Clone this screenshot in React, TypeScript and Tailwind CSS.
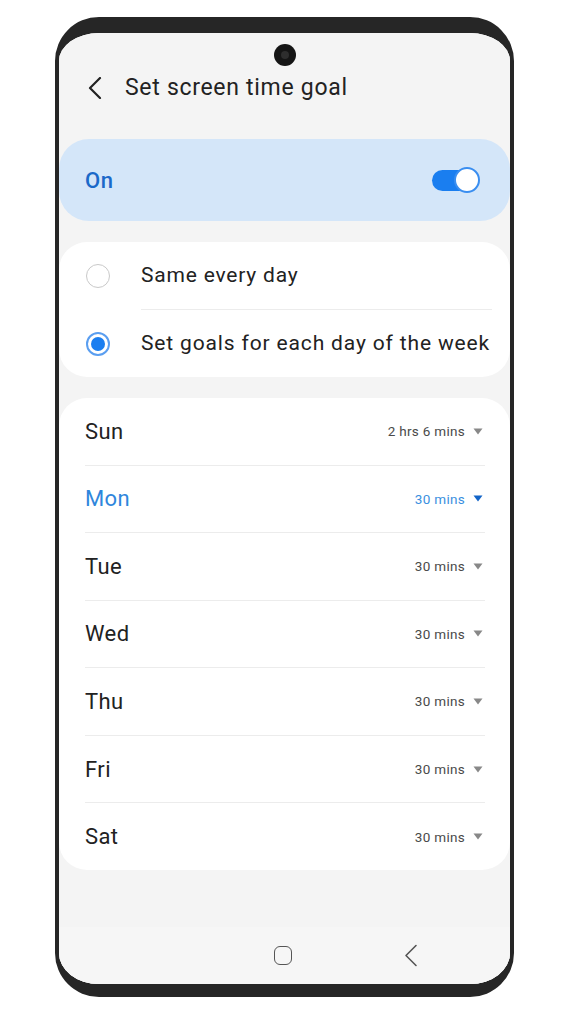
import React from 'react';

const days = [
  { day: 'Sun', value: '2 hrs 6 mins' },
  { day: 'Mon', value: '30 mins', active: true },
  { day: 'Tue', value: '30 mins' },
  { day: 'Wed', value: '30 mins' },
  { day: 'Thu', value: '30 mins' },
  { day: 'Fri', value: '30 mins' },
  { day: 'Sat', value: '30 mins' },
];

function Radio({ checked }: { checked?: boolean }) {
  if (checked) {
    return (
      <div className="w-[24px] h-[24px] rounded-full border-2 border-[#5a9ef0] flex items-center justify-center shrink-0">
        <div className="w-[14px] h-[14px] rounded-full bg-[#1a7ef0]" />
      </div>
    );
  }
  return <div className="w-[24px] h-[24px] rounded-full border-[1.5px] border-[#c9c9c9] shrink-0" />;
}

function Caret({ color }: { color: string }) {
  return (
    <svg width="10" height="7" viewBox="0 0 10 7" className="ml-[8px]">
      <path d="M0.5 0.5 L9.5 0.5 L5 6.5 Z" fill={color} />
    </svg>
  );
}

export default function App() {
  return (
    <div className="w-[570px] h-[1021px] bg-white pt-[17px] pl-[55px]" style={{ fontFamily: 'Roboto, "Noto Sans", sans-serif' }}>
      <div className="w-[459px] h-[980px] rounded-[44px] border-x-4 border-t-[16px] border-b-[13px] border-[#262626] overflow-hidden">
        <div className="h-full bg-[#f4f4f4] flex flex-col">
          {/* camera */}
          <div className="flex justify-center pt-[11px]">
            <div className="w-[22px] h-[22px] rounded-full bg-[#151515] flex items-center justify-center">
              <div className="w-[8px] h-[8px] rounded-full bg-[#2e2e2e]" />
            </div>
          </div>

          {/* header */}
          <div className="h-[44px] flex items-center pl-[29px]">
            <svg width="14" height="22" viewBox="0 0 14 22" fill="none">
              <path d="M12 1 L2 11 L12 21" stroke="#222" strokeWidth="2.2" strokeLinecap="round" strokeLinejoin="round" />
            </svg>
            <span className="ml-[23px] text-[23px] text-[#222] tracking-[0.7px]">Set screen time goal</span>
          </div>

          {/* on toggle */}
          <div className="mt-[29px] h-[82px] rounded-[30px] bg-[#d4e6f9] flex items-center justify-between pl-[26px] pr-[30px]">
            <span className="text-[22px] font-medium text-[#1b69c9] tracking-[0.5px]">On</span>
            <div className="relative w-[48px] h-[26px] flex items-center">
              <div className="w-[40px] h-[21px] rounded-full bg-[#1a7ef0]" />
              <div className="absolute right-0 top-0 w-[26px] h-[26px] rounded-full bg-white border-2 border-[#3a8ef0]" />
            </div>
          </div>

          {/* mode */}
          <div className="mt-[21px] bg-white rounded-[28px]">
            <div className="h-[67px] flex items-center pl-[27px]">
              <Radio />
              <span className="ml-[31px] text-[21px] text-[#222] tracking-[0.8px]">Same every day</span>
            </div>
            <div className="h-px bg-[#ececec] ml-[82px] mr-[18px]" />
            <div className="h-[67px] flex items-center pl-[27px]">
              <Radio checked />
              <span className="ml-[31px] text-[21px] text-[#222] whitespace-nowrap tracking-[0.85px]">Set goals for each day of the week</span>
            </div>
          </div>

          {/* days */}
          <div className="mt-[21px] bg-white rounded-[28px]">
            {days.map((d, i) => (
              <div key={d.day}>
                {i > 0 && <div className="h-px bg-[#ececec] ml-[26px] mr-[25px]" />}
                <div className="h-[66.57px] flex items-center justify-between pl-[26px] pr-[27px]">
                  <span className={`text-[22px] tracking-[0.4px] ${d.active ? 'text-[#2f86dc]' : 'text-[#222]'}`}>{d.day}</span>
                  <div className="flex items-center">
                    <span className={`text-[13.5px] tracking-[0.3px] ${d.active ? 'text-[#3a8fe0]' : 'text-[#4a4a4a]'}`}>{d.value}</span>
                    <Caret color={d.active ? '#1264c8' : '#888'} />
                  </div>
                </div>
              </div>
            ))}
          </div>

          <div className="flex-1" />

          {/* nav bar */}
          <div className="h-[57px] bg-[#f6f6f6] flex items-center">
            <div className="w-[451px] relative h-full">
              <div className="absolute left-[215px] top-[19px] w-[18px] h-[19px] rounded-[6px] border-[1.6px] border-[#555]" />
              <svg className="absolute left-[345px] top-[17px]" width="14" height="23" viewBox="0 0 14 23" fill="none">
                <path d="M12 1.5 L2 11.5 L12 21.5" stroke="#555" strokeWidth="1.6" strokeLinecap="round" strokeLinejoin="round" />
              </svg>
            </div>
          </div>
        </div>
      </div>
    </div>
  );
}
